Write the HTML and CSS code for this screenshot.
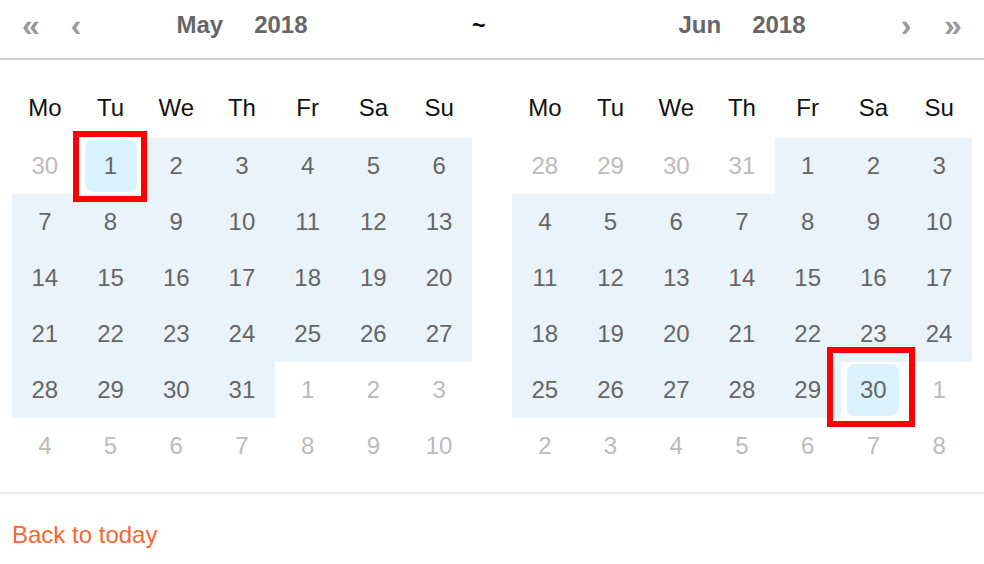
FILE: index.html
```html
<!DOCTYPE html>
<html lang="en">
<head>
  <meta charset="UTF-8" />
  <title>Range calendar</title>
  <link rel="stylesheet" href="styles.css">
</head>
<body>
  <div class="calendar">
    <div class="header">
      <div class="header-part left">
        <div class="nav">
          <a class="nav-btn">&laquo;</a>
          <a class="nav-btn">&lsaquo;</a>
        </div>
        <div class="title"><span>May</span><span>2018</span></div>
        <div class="nav"></div>
      </div>
      <div class="middle">~</div>
      <div class="header-part right">
        <div class="nav"></div>
        <div class="title"><span>Jun</span><span>2018</span></div>
        <div class="nav end">
          <a class="nav-btn">&rsaquo;</a>
          <a class="nav-btn">&raquo;</a>
        </div>
      </div>
    </div>

    <div class="body">
      <div class="part left">
        <table>
          <thead>
            <tr><th>Mo</th><th>Tu</th><th>We</th><th>Th</th><th>Fr</th><th>Sa</th><th>Su</th></tr>
          </thead>
          <tbody>
            <tr>
              <td class="other"><span class="date">30</span></td>
              <td class="selected"><span class="date">1</span><i class="mark mark-start"></i></td>
              <td class="range"><span class="date">2</span></td>
              <td class="range"><span class="date">3</span></td>
              <td class="range"><span class="date">4</span></td>
              <td class="range"><span class="date">5</span></td>
              <td class="range"><span class="date">6</span></td>
            </tr>
            <tr class="range">
              <td><span class="date">7</span></td>
              <td><span class="date">8</span></td>
              <td><span class="date">9</span></td>
              <td><span class="date">10</span></td>
              <td><span class="date">11</span></td>
              <td><span class="date">12</span></td>
              <td><span class="date">13</span></td>
            </tr>
            <tr class="range">
              <td><span class="date">14</span></td>
              <td><span class="date">15</span></td>
              <td><span class="date">16</span></td>
              <td><span class="date">17</span></td>
              <td><span class="date">18</span></td>
              <td><span class="date">19</span></td>
              <td><span class="date">20</span></td>
            </tr>
            <tr class="range">
              <td><span class="date">21</span></td>
              <td><span class="date">22</span></td>
              <td><span class="date">23</span></td>
              <td><span class="date">24</span></td>
              <td><span class="date">25</span></td>
              <td><span class="date">26</span></td>
              <td><span class="date">27</span></td>
            </tr>
            <tr>
              <td class="range"><span class="date">28</span></td>
              <td class="range"><span class="date">29</span></td>
              <td class="range"><span class="date">30</span></td>
              <td class="range"><span class="date">31</span></td>
              <td class="other"><span class="date">1</span></td>
              <td class="other"><span class="date">2</span></td>
              <td class="other"><span class="date">3</span></td>
            </tr>
            <tr class="other">
              <td><span class="date">4</span></td>
              <td><span class="date">5</span></td>
              <td><span class="date">6</span></td>
              <td><span class="date">7</span></td>
              <td><span class="date">8</span></td>
              <td><span class="date">9</span></td>
              <td><span class="date">10</span></td>
            </tr>
          </tbody>
        </table>
      </div>

      <div class="part right">
        <table>
          <thead>
            <tr><th>Mo</th><th>Tu</th><th>We</th><th>Th</th><th>Fr</th><th>Sa</th><th>Su</th></tr>
          </thead>
          <tbody>
            <tr>
              <td class="other"><span class="date">28</span></td>
              <td class="other"><span class="date">29</span></td>
              <td class="other"><span class="date">30</span></td>
              <td class="other"><span class="date">31</span></td>
              <td class="range"><span class="date">1</span></td>
              <td class="range"><span class="date">2</span></td>
              <td class="range"><span class="date">3</span></td>
            </tr>
            <tr class="range">
              <td><span class="date">4</span></td>
              <td><span class="date">5</span></td>
              <td><span class="date">6</span></td>
              <td><span class="date">7</span></td>
              <td><span class="date">8</span></td>
              <td><span class="date">9</span></td>
              <td><span class="date">10</span></td>
            </tr>
            <tr class="range">
              <td><span class="date">11</span></td>
              <td><span class="date">12</span></td>
              <td><span class="date">13</span></td>
              <td><span class="date">14</span></td>
              <td><span class="date">15</span></td>
              <td><span class="date">16</span></td>
              <td><span class="date">17</span></td>
            </tr>
            <tr class="range">
              <td><span class="date">18</span></td>
              <td><span class="date">19</span></td>
              <td><span class="date">20</span></td>
              <td><span class="date">21</span></td>
              <td><span class="date">22</span></td>
              <td><span class="date">23</span></td>
              <td><span class="date">24</span></td>
            </tr>
            <tr>
              <td class="range"><span class="date">25</span></td>
              <td class="range"><span class="date">26</span></td>
              <td class="range"><span class="date">27</span></td>
              <td class="range"><span class="date">28</span></td>
              <td class="range"><span class="date">29</span></td>
              <td class="selected"><span class="date">30</span><i class="mark mark-end"></i></td>
              <td class="other"><span class="date">1</span></td>
            </tr>
            <tr class="other">
              <td><span class="date">2</span></td>
              <td><span class="date">3</span></td>
              <td><span class="date">4</span></td>
              <td><span class="date">5</span></td>
              <td><span class="date">6</span></td>
              <td><span class="date">7</span></td>
              <td><span class="date">8</span></td>
            </tr>
          </tbody>
        </table>
      </div>
    </div>

    <div class="footer">
      <a class="today-btn">Back to today</a>
    </div>
  </div>
</body>
</html>
```

FILE: styles.css
```css
* {
  box-sizing: border-box;
  margin: 0;
  padding: 0;
}

body {
  font-family: 'Liberation Sans', Arial, sans-serif;
  font-size: 24px;
  background: #fff;
  color: #666;
}

.calendar {
  width: 984px;
}

/* header */
.header {
  display: flex;
  height: 60px;
  border-bottom: 2px solid #ccc;
  line-height: 50px;
}

.header-part {
  width: 472px;
  display: grid;
  grid-template-columns: 1fr auto 1fr;
}

.header-part.left {
  padding-left: 12px;
}

.header-part.right {
  padding-right: 12px;
}

.middle {
  width: 40px;
  color: #000;
  font-size: 23px;
  font-weight: bold;
}

.nav {
  display: flex;
  gap: 7px;
}

.nav.end {
  justify-content: flex-end;
  gap: 9px;
}

.nav-btn {
  width: 38px;
  text-align: center;
  font-size: 32px;
  font-weight: bold;
  color: #999;
  cursor: pointer;
}

.title {
  display: flex;
  gap: 31px;
  font-weight: bold;
  color: #666;
}

/* month tables */
.body {
  display: flex;
  padding: 18px 0 18px;
  border-bottom: 2px solid #e9e9e9;
}

.part {
  width: 492px;
}

.part.left {
  padding: 0 20px 0 12px;
}

.part.right {
  padding: 0 12px 0 20px;
}

table {
  width: 100%;
  table-layout: fixed;
  border-collapse: collapse;
  border-spacing: 0;
}

th {
  height: 60px;
  font-weight: normal;
  color: #111;
  text-align: center;
}

td {
  height: 56px;
  padding: 0;
  text-align: center;
  position: relative;
}

.date {
  display: block;
  width: 52px;
  height: 52px;
  margin: 0 auto;
  line-height: 52px;
  border-radius: 8px;
  color: #666;
}

td.range,
tr.range td {
  background: #eaf3f9;
}

td.other .date,
tr.other .date {
  color: #bbb;
}

td.selected .date {
  background: #daf2fc;
}

/* red annotation boxes */
.mark {
  position: absolute;
  z-index: 1;
  border: 6px solid #f00;
}

.mark-start {
  left: -5px;
  top: -7px;
  width: 74px;
  height: 71px;
}

.mark-end {
  left: -14px;
  top: -15px;
  width: 88px;
  height: 80px;
}

/* footer */
.footer {
  padding: 19px 12px 0;
  line-height: 44px;
}

.today-btn {
  color: #f46830;
  cursor: pointer;
}
```
